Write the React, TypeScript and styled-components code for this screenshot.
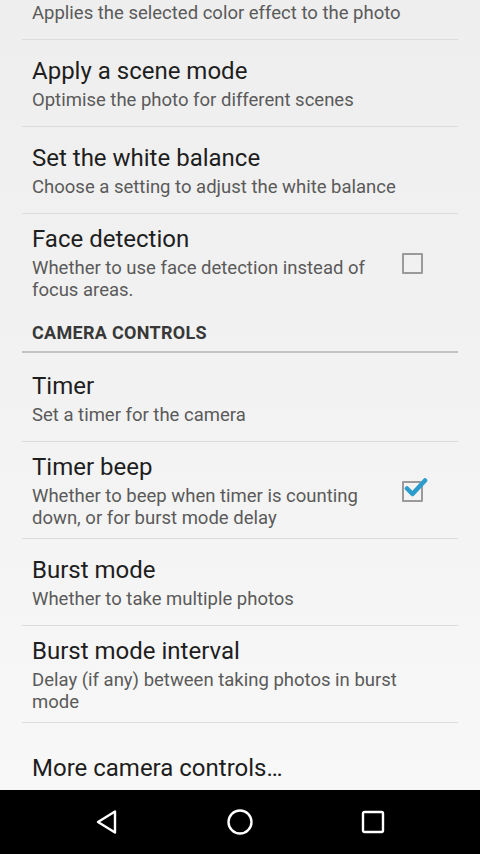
import styled, { createGlobalStyle } from 'styled-components';

const GlobalStyle = createGlobalStyle`
  html, body {
    margin: 0;
    padding: 0;
    background: #f1f1f1;
  }
  * {
    box-sizing: border-box;
  }
`;

const Screen = styled.div`
  width: 480px;
  height: 854px;
  display: flex;
  flex-direction: column;
  font-family: Roboto, 'Noto Sans', sans-serif;
  background: linear-gradient(#eeeeee, #f3f3f3 55%, #f9f9f9);
  overflow: hidden;
`;

const List = styled.div`
  flex: 1;
  overflow: hidden;
  padding: 0 22px;
`;

const Row = styled.div<{ $last?: boolean; $first?: boolean }>`
  display: flex;
  align-items: center;
  min-height: 87px;
  margin-top: ${(p) => (p.$first ? '2px' : '0')};
  padding: 11px 35px 9px 10px;
  border-bottom: ${(p) => (p.$last ? 'none' : '1px solid #dcdcdc')};
`;

const PartialRow = styled.div`
  padding: 2px 10px 15px;
  border-bottom: 1px solid #dcdcdc;
`;

const Texts = styled.div`
  flex: 1;
  display: flex;
  flex-direction: column;
  gap: 4px;
`;

const Title = styled.div`
  font-size: 24px;
  line-height: 28px;
  color: #1e1e1e;
`;

const Summary = styled.div`
  font-size: 18.5px;
  line-height: 22px;
  color: #5a5a5a;
  padding-right: 8px;
`;

const Category = styled.div`
  padding: 13px 10px 8px;
  font-size: 18px;
  letter-spacing: 0.3px;
  line-height: 20px;
  font-weight: 700;
  color: #383838;
  border-bottom: 2px solid #c2c2c2;
`;

const Box = styled.div`
  position: relative;
  width: 21px;
  height: 21px;
  margin-left: 22px;
  border: 2px solid #9a9a9a;
  border-radius: 1px;
  flex-shrink: 0;
`;

const Tick = styled.svg`
  position: absolute;
  left: 0;
  top: -6px;
  width: 24px;
  height: 22px;
`;

const NavBar = styled.div`
  height: 64px;
  flex-shrink: 0;
  background: #000;
  display: flex;
  justify-content: space-around;
  align-items: center;
  padding: 0 40px;
`;

const NavButton = styled.div`
  width: 80px;
  display: flex;
  justify-content: center;
  align-items: center;
`;

const Checkbox = ({ checked }: { checked?: boolean }) => (
  <Box>
    {checked && (
      <Tick viewBox="0 0 24 22">
        <path d="M3 11.5 L8.5 17 L21 3.5" fill="none" stroke="#2b9ccb" strokeWidth="4.5" strokeLinecap="round" strokeLinejoin="round" />
      </Tick>
    )}
  </Box>
);

type Pref = { title: string; summary?: string; check?: 'on' | 'off' };

const imagePrefs: Pref[] = [
  { title: 'Apply a scene mode', summary: 'Optimise the photo for different scenes' },
  { title: 'Set the white balance', summary: 'Choose a setting to adjust the white balance' },
  { title: 'Face detection', summary: 'Whether to use face detection instead of focus areas.', check: 'off' },
];

const controlPrefs: Pref[] = [
  { title: 'Timer', summary: 'Set a timer for the camera' },
  { title: 'Timer beep', summary: 'Whether to beep when timer is counting down, or for burst mode delay', check: 'on' },
  { title: 'Burst mode', summary: 'Whether to take multiple photos' },
  { title: 'Burst mode interval', summary: 'Delay (if any) between taking photos in burst mode' },
  { title: 'More camera controls…' },
];

const PrefRow = ({ pref, first, last }: { pref: Pref; first?: boolean; last?: boolean }) => (
  <Row $first={first} $last={last}>
    <Texts>
      <Title>{pref.title}</Title>
      {pref.summary && <Summary>{pref.summary}</Summary>}
    </Texts>
    {pref.check && <Checkbox checked={pref.check === 'on'} />}
  </Row>
);

const App = () => {
  return (
    <Screen>
      <GlobalStyle />
      <List>
        <PartialRow>
          <Summary>Applies the selected color effect to the photo</Summary>
        </PartialRow>
        {imagePrefs.map((p, i) => (
          <PrefRow key={p.title} pref={p} last={i === imagePrefs.length - 1} />
        ))}
        <Category>CAMERA CONTROLS</Category>
        {controlPrefs.map((p, i) => (
          <PrefRow key={p.title} pref={p} first={i === 0} last={i === controlPrefs.length - 1} />
        ))}
      </List>
      <NavBar>
        <NavButton>
          <svg width="24" height="26" viewBox="0 0 24 26">
            <path d="M20 2.5 L20 23.5 L3 13 Z" fill="none" stroke="#fff" strokeWidth="2.4" strokeLinejoin="round" />
          </svg>
        </NavButton>
        <NavButton>
          <svg width="28" height="28" viewBox="0 0 28 28">
            <circle cx="14" cy="14" r="11.5" fill="none" stroke="#fff" strokeWidth="2.4" />
          </svg>
        </NavButton>
        <NavButton>
          <svg width="24" height="24" viewBox="0 0 24 24">
            <rect x="2" y="2" width="20" height="20" rx="1.5" fill="none" stroke="#fff" strokeWidth="2.4" />
          </svg>
        </NavButton>
      </NavBar>
    </Screen>
  );
};

export default App;
